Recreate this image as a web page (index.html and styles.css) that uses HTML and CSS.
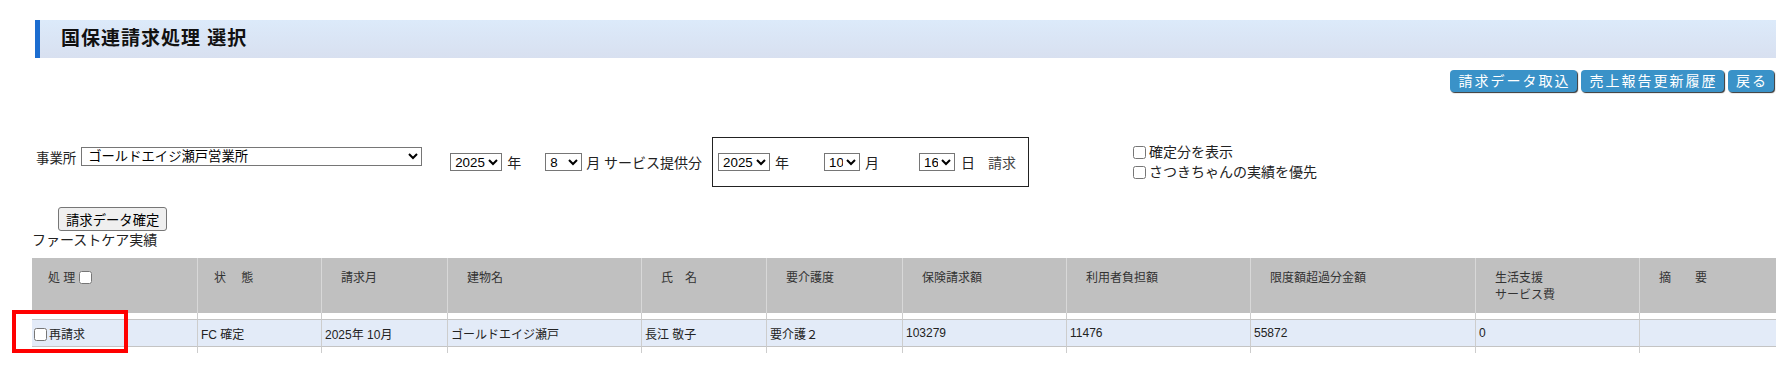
FILE: index.html
```html
<!DOCTYPE html>
<html lang="ja">
<head>
  <meta charset="UTF-8" />
  <title>国保連請求処理 選択</title>
  <link rel="stylesheet" href="styles.css">
</head>
<body>

  <div class="title-bar">国保連請求処理 選択</div>

  <div class="top-buttons">
    <button class="blue-btn btn-import">請求データ取込</button>
    <button class="blue-btn btn-history">売上報告更新履歴</button>
    <button class="blue-btn btn-back">戻る</button>
  </div>

  <div class="filter-row">
    <div class="office">
      <span class="office-label">事業所</span>
      <select class="office-select">
        <option>ゴールドエイジ瀬戸営業所</option>
      </select>
    </div>

    <div class="service">
      <select class="sel-year"><option>2025</option></select>
      <span class="unit">年</span>
      <select class="sel-month"><option>8</option></select>
      <span class="unit">月 サービス提供分</span>
    </div>

    <div class="billing-box">
      <select class="sel-year"><option>2025</option></select>
      <span class="unit u-year">年</span>
      <select class="sel-small"><option>10</option></select>
      <span class="unit u-month">月</span>
      <select class="sel-small"><option>16</option></select>
      <span class="unit u-day">日</span>
      <span class="unit u-req">請求</span>
    </div>

    <div class="options">
      <label><input type="checkbox">確定分を表示</label>
      <label><input type="checkbox">さつきちゃんの実績を優先</label>
    </div>
  </div>

  <div class="confirm">
    <button class="gray-btn">請求データ確定</button>
  </div>

  <div class="section-label">ファーストケア実績</div>

  <table class="result">
    <tr class="head">
      <th class="c1 first">処 理<input type="checkbox"></th>
      <th class="c2 first">状　 態</th>
      <th class="c3">請求月</th>
      <th class="c4">建物名</th>
      <th class="c5">氏　名</th>
      <th class="c6">要介護度</th>
      <th class="c7">保険請求額</th>
      <th class="c8">利用者負担額</th>
      <th class="c9">限度額超過分金額</th>
      <th class="c10">生活支援<br>サービス費</th>
      <th class="c11">摘　　要</th>
    </tr>
    <tr class="gap">
      <td></td><td></td><td></td><td></td><td></td><td></td><td></td><td></td><td></td><td></td><td></td>
    </tr>
    <tr class="data">
      <td class="check-cell"><input type="checkbox">再請求</td>
      <td>FC 確定</td>
      <td>2025年 10月</td>
      <td>ゴールドエイジ瀬戸</td>
      <td>長江 敬子</td>
      <td>要介護２</td>
      <td>103279</td>
      <td>11476</td>
      <td>55872</td>
      <td>0</td>
      <td></td>
    </tr>
    <tr class="gap">
      <td></td><td></td><td></td><td></td><td></td><td></td><td></td><td></td><td></td><td></td><td></td>
    </tr>
  </table>

  <div class="highlight"></div>

</body>
</html>
```

FILE: styles.css
```css
body {
  font-family: "Liberation Sans", "Noto Sans CJK JP", sans-serif;
  font-size: 14px;
  color: #222;
  margin: 0;
  padding: 0;
  background: #fff;
  position: relative;
  overflow: hidden;
}

.title-bar {
  margin: 20px 0 0 35px;
  height: 38px;
  line-height: 38px;
  padding-left: 21px;
  border-left: 5px solid #1c6dd0;
  background: linear-gradient(#dceafa, #d8e0f0);
  font-size: 19px;
  font-weight: bold;
  letter-spacing: 1px;
  color: #111;
}

.top-buttons {
  margin-top: 12px;
  display: flex;
  justify-content: flex-end;
  gap: 4px;
  padding-right: 2px;
}

.blue-btn {
  height: 22px;
  padding: 0 0 0 2px;
  border: none;
  border-radius: 4px;
  background: #3a92c8;
  color: #fff;
  font-family: inherit;
  font-size: 14px;
  letter-spacing: 2px;
  line-height: 22px;
  text-align: center;
  box-shadow: 1px 1px 1px #333;
}

.btn-import { width: 127px; }
.btn-history { width: 143px; }
.btn-back { width: 46px; }

.filter-row {
  display: flex;
  align-items: center;
  height: 50px;
  margin-top: 45px;
  padding-left: 36px;
}

.office {
  display: flex;
  align-items: center;
  margin-bottom: 11px;
}

.office-label {
  font-size: 13.4px;
  margin-right: 5px;
}

select {
  font-family: "Liberation Sans", "Noto Sans CJK JP", sans-serif;
  font-size: 13.33px;
  height: 18px;
  padding: 0;
  border: 1px solid #767676;
  border-radius: 0;
  background: #fff;
  color: #000;
}

.office-select {
  width: 341px;
  height: 19px;
  padding-left: 2px;
}

.sel-year { width: 52px; }
.sel-month { width: 37px; }
.sel-small { width: 36px; }

.service {
  display: flex;
  align-items: center;
  margin-left: 28px;
}

.service .unit { margin-left: 5px; }
.service .sel-month { margin-left: 24px; }
.service .unit:last-child { margin-left: 4px; }

.billing-box {
  display: flex;
  align-items: center;
  box-sizing: border-box;
  width: 317px;
  height: 50px;
  margin-left: 10px;
  padding-left: 5px;
  border: 1px solid #222;
}

.u-year { margin: 0 35px 0 5px; }
.u-month { margin: 0 40px 0 5px; }
.u-day { margin-left: 6px; }
.u-req { margin-left: 13px; color: #444; }

.options {
  display: flex;
  flex-direction: column;
  margin-left: 104px;
  line-height: 20px;
}

.options label {
  display: flex;
  align-items: center;
}

.options input {
  margin: 0 3px 0 0;
  width: 13px;
  height: 13px;
}

.confirm {
  margin: 20px 0 0 58px;
}

.gray-btn {
  height: 24px;
  padding: 0 7px;
  font-family: inherit;
  font-size: 13.33px;
  color: #000;
  background: #efefef;
  border: 1px solid #767676;
  border-radius: 3px;
}

.section-label {
  margin-left: 32px;
  height: 18px;
  line-height: 18px;
}

.result {
  margin: 9px 0 0 32px;
  border-collapse: separate;
  border-spacing: 0;
  table-layout: fixed;
  width: 1744px;
}

.result th,
.result td {
  box-sizing: border-box;
  border-left: 1px solid #cdcdcd;
  padding: 0;
}

.result tr > :first-child { border-left: none; }

.head th {
  height: 55px;
  background: #c0c0c0;
  border-left-color: #d8d8d8;
  vertical-align: top;
  text-align: left;
  font-size: 12px;
  font-weight: normal;
  line-height: 17px;
  color: #333;
  padding: 12px 0 0 19px;
}

.head th.first { padding-left: 16px; }

.head th input {
  margin: 0 0 0 4px;
  width: 13px;
  height: 13px;
  vertical-align: -2px;
}

.c1 { width: 165px; }
.c2 { width: 124px; }
.c3 { width: 126px; }
.c4 { width: 194px; }
.c5 { width: 125px; }
.c6 { width: 136px; }
.c7 { width: 164px; }
.c8 { width: 184px; }
.c9 { width: 225px; }
.c10 { width: 164px; }
.c11 { width: 137px; }

.gap td { height: 6px; }

.data td {
  height: 28px;
  background: #e3ebf8;
  border-top: 1px solid #c4c4c4;
  border-bottom: 1px solid #c4c4c4;
  font-size: 12px;
  color: #222;
  padding-left: 3px;
  white-space: nowrap;
}

.data td.check-cell { padding-left: 2px; }

.check-cell input {
  margin: 0 2px 0 0;
  width: 13px;
  height: 13px;
  vertical-align: -2px;
}

.highlight {
  position: absolute;
  left: 12px;
  top: 310px;
  width: 116px;
  height: 43px;
  box-sizing: border-box;
  border: 4px solid #ff0000;
}
```
